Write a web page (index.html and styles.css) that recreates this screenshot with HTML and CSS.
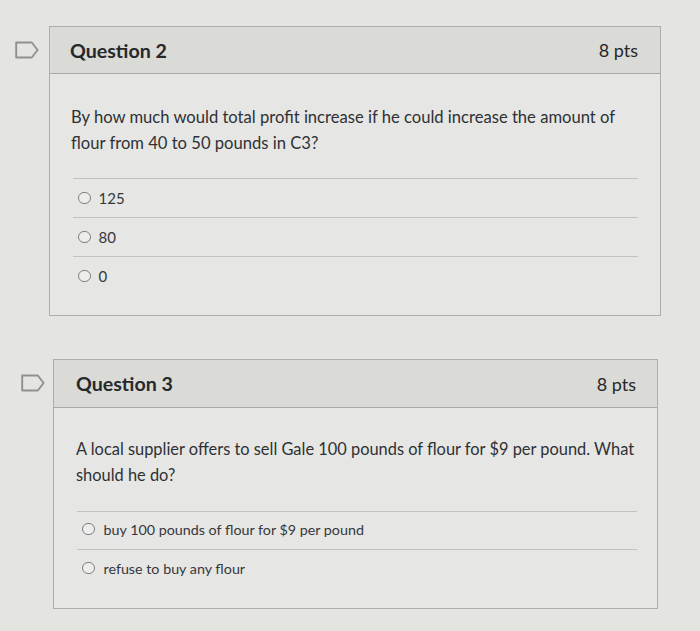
FILE: index.html
```html
<!DOCTYPE html>
<html lang="en">
<head>
<meta charset="utf-8">
<title>Quiz</title>
<link rel="stylesheet" href="styles.css">
</head>
<body>
<main class="page">
  <section class="question q2">
    <div class="flag-col">
      <svg class="flag" width="24" height="18" viewBox="0 0 24 18" aria-hidden="true"><path d="M1.2 1.5 H16.8 L22.6 9 L16.8 16.5 H1.2 Z" fill="none" stroke="#8f9090" stroke-width="1.9" stroke-linejoin="round"/></svg>
    </div>
    <div class="card">
      <header class="card-head">
        <h2 class="title">Question 2</h2>
        <span class="pts">8 pts</span>
      </header>
      <div class="card-body">
        <p class="prompt">By how much would total profit increase if he could increase the amount of flour from 40 to 50 pounds in C3?</p>
        <ul class="answers">
          <li class="answer"><span class="radio"></span><span>125</span></li>
          <li class="answer"><span class="radio"></span><span>80</span></li>
          <li class="answer"><span class="radio"></span><span>0</span></li>
        </ul>
      </div>
    </div>
  </section>

  <section class="question q3">
    <div class="flag-col">
      <svg class="flag" width="24" height="18" viewBox="0 0 24 18" aria-hidden="true"><path d="M1.2 1.5 H16.8 L22.6 9 L16.8 16.5 H1.2 Z" fill="none" stroke="#8f9090" stroke-width="1.9" stroke-linejoin="round"/></svg>
    </div>
    <div class="card">
      <header class="card-head">
        <h2 class="title">Question 3</h2>
        <span class="pts">8 pts</span>
      </header>
      <div class="card-body">
        <p class="prompt">A local supplier offers to sell Gale 100 pounds of flour for $9 per pound. What should he do?</p>
        <ul class="answers">
          <li class="answer"><span class="radio"></span><span>buy 100 pounds of flour for $9 per pound</span></li>
          <li class="answer"><span class="radio"></span><span>refuse to buy any flour</span></li>
        </ul>
      </div>
    </div>
  </section>
</main>
</body>
</html>
```

FILE: styles.css
```css
html, body {
  margin: 0;
  padding: 0;
}
body {
  background: #e4e4e1;
  font-family: Lato, "Liberation Sans", sans-serif;
  color: #2d3135;
  width: 700px;
  height: 631px;
  overflow: hidden;
}
.page {
  display: flex;
  flex-direction: column;
  padding-top: 26px;
}
.question {
  display: flex;
  align-items: flex-start;
}
.q2 {
  padding-left: 15px;
  gap: 10px;
}
.q3 {
  margin-top: 43px;
  padding-left: 21px;
  gap: 8px;
}
.flag-col {
  width: 24px;
  height: 47px;
  display: flex;
  align-items: center;
}
.flag {
  display: block;
}
.card {
  border: 1px solid #aeaeab;
  background: #e6e6e4;
}
.q2 .card { width: 610px; }
.q3 .card { width: 603px; }
.card-head {
  height: 46px;
  display: flex;
  align-items: center;
  justify-content: space-between;
  padding: 0 22px 0 20px;
  background: #dadad7;
  border-bottom: 1px solid #a9a9a6;
}
.q3 .card-head {
  height: 47px;
  padding: 0 21px 0 22px;
}
.title {
  margin: 0;
  font-size: 19.6px;
  font-weight: 700;
  color: #26282a;
}
.pts {
  font-size: 18px;
  font-weight: 400;
  color: #26282a;
}
.card-body {
  padding: 30px 22px 20px 21px;
}
.q3 .card-body {
  padding: 28px 20px 21px 22px;
}
.prompt {
  margin: 0;
  font-size: 16.6px;
  line-height: 26px;
  color: #2e3134;
}
.q3 .prompt {
  font-size: 16.4px;
}
.answers {
  list-style: none;
  margin: 22px 0 0 2px;
  padding: 0;
}
.q3 .answers {
  margin-top: 23px;
  margin-left: 1px;
}
.answer {
  display: flex;
  align-items: center;
  gap: 8px;
  height: 38px;
  padding-left: 5px;
  border-top: 1px solid #c2c2bf;
  font-size: 15px;
  color: #35383b;
}
.q3 .answer {
  font-size: 14.3px;
  gap: 9px;
  height: 36px;
  padding-bottom: 1px;
}
.q3 .answer:first-child {
  padding-bottom: 3px;
  height: 34px;
}
.radio {
  width: 10.5px;
  height: 10.5px;
  border: 1.5px solid #7d7f80;
  border-radius: 50%;
  background: #ededeb;
  flex: none;
}
```
